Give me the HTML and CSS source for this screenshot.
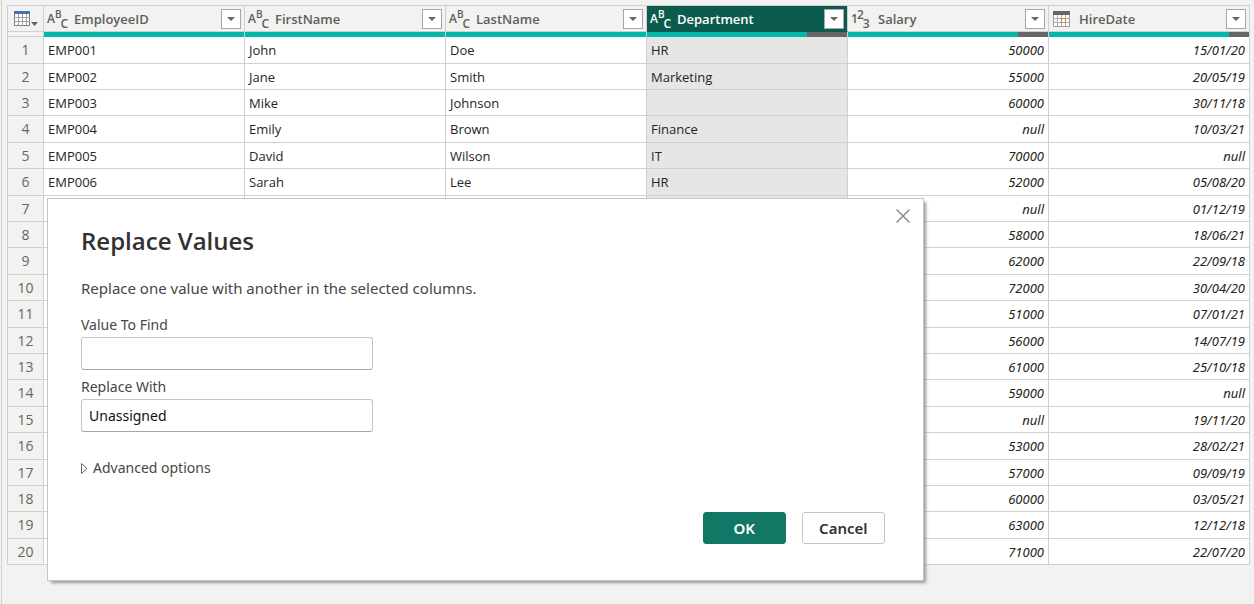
FILE: index.html
```html
<!DOCTYPE html>
<html lang="en">
<head>
<meta charset="utf-8">
<title>Replace Values</title>
<link rel="stylesheet" href="styles.css">
</head>
<body>
<svg class="defs" aria-hidden="true">
  <symbol id="caret" viewBox="0 0 8 4"><path d="M0 0h8L4 4z" fill="currentColor"/></symbol>
</svg>
<main class="grid-pane">
<table class="grid">
  <colgroup><col class="col-index"><col><col><col><col><col><col></colgroup>
  <thead>
    <tr class="names">
      <th class="index"><button class="table-menu" aria-label="Table menu">
        <svg width="24" height="16" viewBox="0 0 24 16"><path d="M.5.5h15v14H.5z" fill="#fff" stroke="#777"/><path d="M0 0h16v3H0z" fill="#3c78b5"/><path d="M4.500 3v12M8.500 3v12M12.500 3v12M0 6.500h16M0 10.500h16" stroke="#a0a0a0"/><path d="M17 11h7l-3.500 4z" fill="#666"/></svg>
      </button></th>
      <th><div class="head"><span class="type"><i>A</i><i class="up">B</i><i class="down">C</i></span><span>EmployeeID</span><button class="filter" aria-label="Filter EmployeeID"><svg><use href="#caret"/></svg></button></div></th>
      <th><div class="head"><span class="type"><i>A</i><i class="up">B</i><i class="down">C</i></span><span>FirstName</span><button class="filter" aria-label="Filter FirstName"><svg><use href="#caret"/></svg></button></div></th>
      <th><div class="head"><span class="type"><i>A</i><i class="up">B</i><i class="down">C</i></span><span>LastName</span><button class="filter" aria-label="Filter LastName"><svg><use href="#caret"/></svg></button></div></th>
      <th class="selected"><div class="head"><span class="type"><i>A</i><i class="up">B</i><i class="down">C</i></span><span>Department</span><button class="filter" aria-label="Filter Department"><svg><use href="#caret"/></svg></button></div></th>
      <th><div class="head"><span class="type digits"><i>1</i><i class="up">2</i><i class="down">3</i></span><span>Salary</span><button class="filter" aria-label="Filter Salary"><svg><use href="#caret"/></svg></button></div></th>
      <th><div class="head"><svg class="type" viewBox="0 0 20 18"><path d="M1.500 1.500h16v15h-16z" fill="#fff" stroke="#999"/><path d="M1 1h17v4H1z" fill="#666"/><path d="M5.500 5v12M9.500 5v12M13.500 5v12M1 8.500h17M1 12.500h17" stroke="#aaa"/><path d="M9.500 8.500h4v4h-4z" fill="#fff" stroke="#c08a30"/></svg><span>HireDate</span><button class="filter" aria-label="Filter HireDate"><svg><use href="#caret"/></svg></button></div></th>
    </tr>
    <tr class="quality">
      <td class="index"></td>
      <td><div class="bar"><div class="valid" style="width:100%"></div></div></td>
      <td><div class="bar"><div class="valid" style="width:100%"></div></div></td>
      <td><div class="bar"><div class="valid" style="width:100%"></div></div></td>
      <td><div class="bar"><div class="valid" style="width:80%"></div></div></td>
      <td><div class="bar"><div class="valid" style="width:85%"></div></div></td>
      <td><div class="bar"><div class="valid" style="width:90%"></div></div></td>
    </tr>
  </thead>
  <tbody>
    <tr><th>1</th><td>EMP001</td><td>John</td><td>Doe</td><td>HR</td><td>50000</td><td>15/01/20</td></tr>
    <tr><th>2</th><td>EMP002</td><td>Jane</td><td>Smith</td><td>Marketing</td><td>55000</td><td>20/05/19</td></tr>
    <tr><th>3</th><td>EMP003</td><td>Mike</td><td>Johnson</td><td></td><td>60000</td><td>30/11/18</td></tr>
    <tr><th>4</th><td>EMP004</td><td>Emily</td><td>Brown</td><td>Finance</td><td>null</td><td>10/03/21</td></tr>
    <tr><th>5</th><td>EMP005</td><td>David</td><td>Wilson</td><td>IT</td><td>70000</td><td>null</td></tr>
    <tr><th>6</th><td>EMP006</td><td>Sarah</td><td>Lee</td><td>HR</td><td>52000</td><td>05/08/20</td></tr>
    <tr><th>7</th><td></td><td></td><td></td><td></td><td>null</td><td>01/12/19</td></tr>
    <tr><th>8</th><td></td><td></td><td></td><td></td><td>58000</td><td>18/06/21</td></tr>
    <tr><th>9</th><td></td><td></td><td></td><td></td><td>62000</td><td>22/09/18</td></tr>
    <tr><th>10</th><td></td><td></td><td></td><td></td><td>72000</td><td>30/04/20</td></tr>
    <tr><th>11</th><td></td><td></td><td></td><td></td><td>51000</td><td>07/01/21</td></tr>
    <tr><th>12</th><td></td><td></td><td></td><td></td><td>56000</td><td>14/07/19</td></tr>
    <tr><th>13</th><td></td><td></td><td></td><td></td><td>61000</td><td>25/10/18</td></tr>
    <tr><th>14</th><td></td><td></td><td></td><td></td><td>59000</td><td>null</td></tr>
    <tr><th>15</th><td></td><td></td><td></td><td></td><td>null</td><td>19/11/20</td></tr>
    <tr><th>16</th><td></td><td></td><td></td><td></td><td>53000</td><td>28/02/21</td></tr>
    <tr><th>17</th><td></td><td></td><td></td><td></td><td>57000</td><td>09/09/19</td></tr>
    <tr><th>18</th><td></td><td></td><td></td><td></td><td>60000</td><td>03/05/21</td></tr>
    <tr><th>19</th><td></td><td></td><td></td><td></td><td>63000</td><td>12/12/18</td></tr>
    <tr><th>20</th><td></td><td></td><td></td><td></td><td>71000</td><td>22/07/20</td></tr>
  </tbody>
</table>
</main>
<form class="dialog" role="dialog" aria-labelledby="title">
  <button type="button" class="close" aria-label="Close"><svg width="14" height="14" viewBox="0 0 14 14"><path d="M.5.5l13 13M13.500.5l-13 13" stroke="#8a8a8a" stroke-width="1.500"/></svg></button>
  <h1 id="title">Replace Values</h1>
  <p class="intro">Replace one value with another in the selected columns.</p>
  <label for="find">Value To Find</label>
  <input id="find" type="text">
  <label for="with">Replace With</label>
  <input id="with" type="text" value="Unassigned">
  <button type="button" class="advanced"><svg width="7" height="11" viewBox="0 0 7 11"><path d="M.5.5v10l5.500-5z" fill="none" stroke="#666"/></svg>Advanced options</button>
  <div class="actions"><button type="button" class="action primary">OK</button><button type="button" class="action">Cancel</button></div>
</form>
</body>
</html>
```
FILE: styles.css
```css
* { box-sizing: border-box; }
body {
  margin: 0;
  min-height: 100vh;
  background: #f2f2f1;
  color: #252423;
  font-family: "Open Sans", "Noto Sans", sans-serif;
  font-size: 13px;
}
button { font: inherit; color: inherit; padding: 0; }
.defs { position: absolute; width: 0; height: 0; }
.grid-pane {
  min-height: 100vh;
  margin-left: 1px;
  padding: 5px 4px 0 5px;
  border-left: 1px solid #d0d0d0;
}
.grid {
  width: 100%;
  table-layout: fixed;
  border-collapse: separate;
  border-spacing: 0;
  border: solid #d0d0d0;
  border-width: 1px 0 0 1px;
}
.col-index { width: 36px; }
.grid th, .grid td {
  padding: 0;
  border: solid #d0d0d0;
  border-width: 0 1px 1px 0;
  line-height: 20px;
  overflow: hidden;
}
.names th { height: 26px; color: #5f5e5c; }
.head {
  display: flex;
  align-items: center;
  padding: 0 3px;
  text-align: left;
  font-family: "Open Sans", sans-serif;
  font-weight: 600;
}
.type {
  display: flex;
  align-items: center;
  width: 20px;
  height: 18px;
  margin-right: 7px;
}
.type i { font-style: normal; font-size: 12px; line-height: 9px; }
.type .up { align-self: flex-start; font-size: 10px; }
.type .down { align-self: flex-end; font-size: 12px; margin-left: -1px; }
.digits i, .digits .up, .digits .down { font-size: 12px; margin: 0 -1px 0 0; }
.filter {
  display: grid;
  place-items: center;
  width: 20px;
  height: 20px;
  margin-left: auto;
  border: 1px solid #a6a6a6;
  background: #fff;
  color: #666;
}
.filter svg { width: 8px; height: 4px; }
.names .selected { background: #0b5c4e; color: #fff; border-bottom-color: #0b5c4e; }
.table-menu { display: block; margin-left: 6px; border: 0; background: none; }
.table-menu svg { display: block; }
.grid .quality td { height: 5px; line-height: 0; border-bottom: 0; }
.grid .quality .index { border-bottom: 1px solid #d0d0d0; }
.bar { height: 5px; background: #666; }
.valid { height: 5px; background: #01b8aa; }
tbody td { height: 26px; background: #fff; }
tbody tr:nth-child(5n+1) td, tbody tr:nth-child(5n+4) td { height: 27px; }
tbody th { color: #666; font-size: 14px; font-weight: 400; text-align: center; }
.grid tbody td { padding: 0 4px; }
tbody td:nth-child(5) { background: #e6e6e6; }
tbody td:nth-child(n+6) { text-align: right; font-family: "Noto Sans", sans-serif; font-style: italic; }
.dialog {
  position: absolute;
  top: 198px;
  left: 47px;
  width: calc(70% - 1px);
  display: flex;
  flex-direction: column;
  align-items: flex-start;
  padding: 24px 38px 36px 33px;
  border: 1px solid #c4c4c4;
  background: #fff;
  box-shadow: 3px 3px 3px -1px #999;
  color: #484644;
  font-family: "Noto Sans", "Open Sans", sans-serif;
  font-size: 14px;
  line-height: 20px;
}
.close { position: absolute; top: 10px; right: 13px; border: 0; background: none; }
.close svg { display: block; }
.dialog h1 { margin: 0; font-family: "Open Sans", sans-serif; font-size: 24px; line-height: 36px; font-weight: 600; color: #323130; }
.intro { margin: 19px 0 17px; font-size: 15px; line-height: 20px; }
.dialog input {
  width: 292px;
  height: 33px;
  margin: 2px 0 7px;
  padding: 0 7px;
  border: 1px solid #c4c4c4;
  border-bottom-color: #a6a6a6;
  border-radius: 3px;
  font: inherit;
  color: #111;
}
.advanced { display: flex; align-items: center; gap: 5px; margin-top: 19px; border: 0; background: none; }
.actions { display: flex; gap: 16px; align-self: flex-end; margin-top: 34px; }
.action {
  width: 83px;
  height: 32px;
  border: 1px solid #c4c4c4;
  border-radius: 3px;
  background: #fff;
  color: #323130;
  font-size: 15px;
  font-weight: 600;
}
.primary { background: #117865; border-color: #117865; color: #fff; }
```
